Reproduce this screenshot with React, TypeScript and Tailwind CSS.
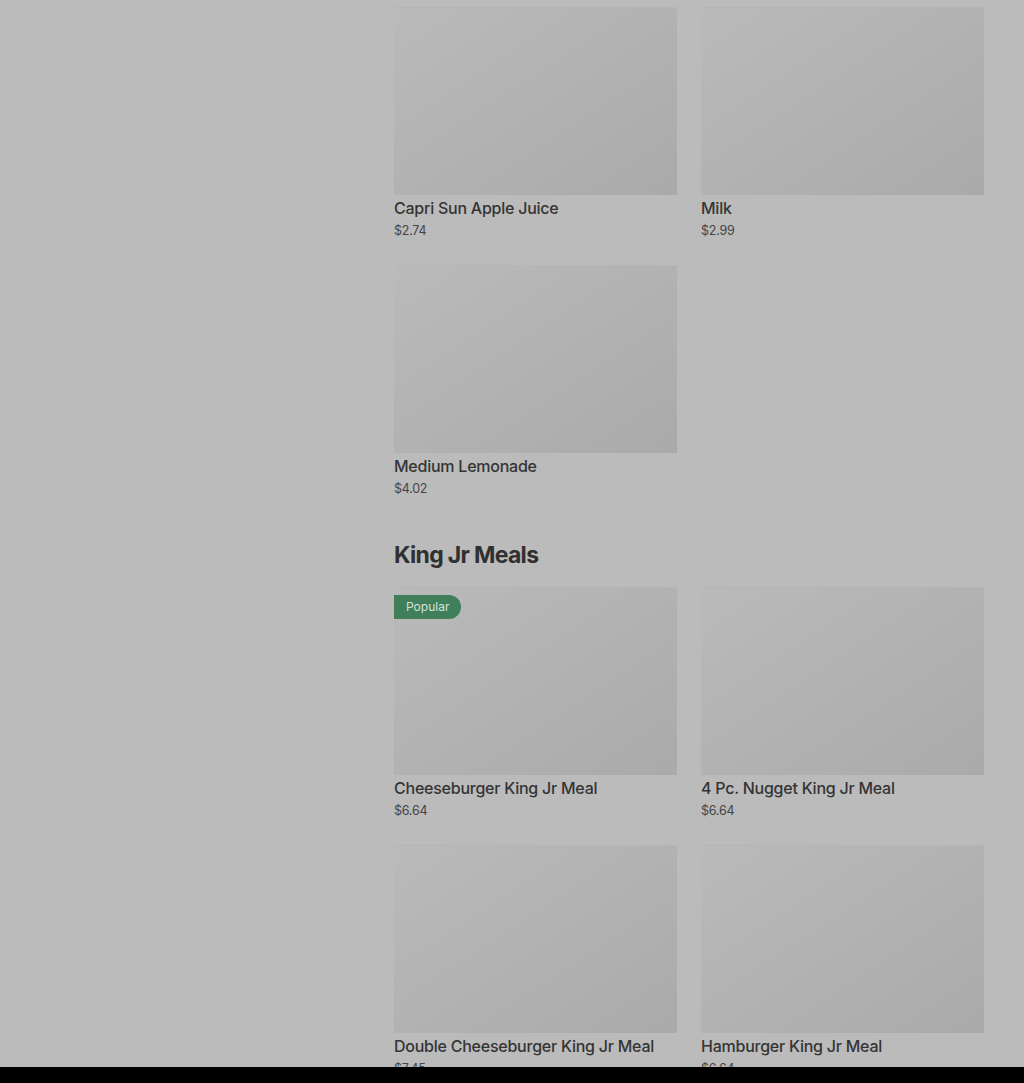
type Item = { name: string; price: string; popular?: boolean };

const drinks: Item[] = [
  { name: 'Capri Sun Apple Juice', price: '$2.74' },
  { name: 'Milk', price: '$2.99' },
  { name: 'Medium Lemonade', price: '$4.02' },
];

const meals: Item[] = [
  { name: 'Cheeseburger King Jr Meal', price: '$6.64', popular: true },
  { name: '4 Pc. Nugget King Jr Meal', price: '$6.64' },
  { name: 'Double Cheeseburger King Jr Meal', price: '$7.45' },
  { name: 'Hamburger King Jr Meal', price: '$6.64' },
];

const ItemCard = ({ item }: { item: Item }) => (
  <div className="flex flex-col pb-[23px]">
    <div className="relative h-[188px] w-full bg-gradient-to-br from-[#bababa] to-[#aaaaaa] border-t border-[#b5b5b5]">
      {item.popular && (
        <span className="absolute left-0 top-[7px] h-6 px-3 flex items-center rounded-r-full bg-[#3f7f5b] text-[12px] text-[#d6e3dc]">
          Popular
        </span>
      )}
    </div>
    <p className="mt-[1px] text-[16px] leading-6 font-medium tracking-[-0.015em] text-[#343434]">{item.name}</p>
    <p className="text-[12.5px] leading-[22px] tracking-[-0.02em] text-[#454545]">{item.price}</p>
  </div>
);

const App = () => {
  return (
    <div
      className="min-h-screen bg-[#bbbbbb] flex"
      style={{ fontFamily: 'Inter, "Noto Sans", sans-serif' }}
    >
      <aside className="w-[394px] shrink-0" />
      <main className="flex-1 pr-10 pt-[7px]">
        <section className="grid grid-cols-2 gap-x-6">
          {drinks.map((d) => (
            <ItemCard key={d.name} item={d} />
          ))}
        </section>

        <section className="mt-[16px]">
          <h2 className="text-[23px] leading-8 font-bold tracking-[-0.03em] text-[#303030] mb-[16px]">
            King Jr Meals
          </h2>
          <div className="grid grid-cols-2 gap-x-6">
            {meals.map((m) => (
              <ItemCard key={m.name} item={m} />
            ))}
          </div>
        </section>
      </main>
      <div className="fixed bottom-0 left-0 right-0 h-4 bg-black" />
    </div>
  );
};

export default App;
